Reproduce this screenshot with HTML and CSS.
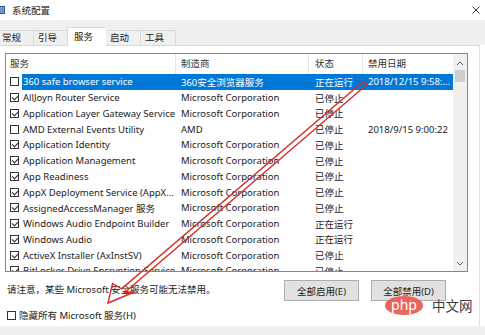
FILE: index.html
```html
<!DOCTYPE html>
<html lang="zh-CN">
<head>
    <meta charset="UTF-8">
    <title>系统配置</title>
    <link rel="stylesheet" href="styles.css">
</head>
<body>

    <!-- Title bar -->
    <div class="titlebar">
        <span class="app-icon"></span>
        <span class="title">系统配置</span>
        <svg class="close" viewBox="0 0 8 8"><path d="M0.5 0.5 L7.5 7.5 M7.5 0.5 L0.5 7.5" stroke="#222" stroke-width="0.9" fill="none"/></svg>
    </div>

    <!-- Tabs -->
    <div class="tabs">
        <div class="tab tab-general">常规</div>
        <div class="tab">引导</div>
        <div class="tab active">服务</div>
        <div class="tab">启动</div>
        <div class="tab">工具</div>
    </div>

    <div class="panel">
        <!-- Services list -->
        <div class="list">
            <div class="grid">
                <div class="head">
                    <div class="hcell c-name">服务</div>
                    <div class="hcell c-maker">制造商</div>
                    <div class="hcell c-state">状态</div>
                    <div class="hcell c-date">禁用日期</div>
                </div>

                <div class="row selected">
                    <span class="box"></span>
                    <div class="cells">
                        <span class="c-name">360 safe browser service</span>
                        <span class="c-maker">360安全浏览器服务</span>
                        <span class="c-state">正在运行</span>
                        <span class="c-date">2018/12/15 9:58:...</span>
                    </div>
                </div>
                <div class="row">
                    <span class="box checked"></span>
                    <div class="cells">
                        <span class="c-name">AllJoyn Router Service</span>
                        <span class="c-maker">Microsoft Corporation</span>
                        <span class="c-state">已停止</span>
                        <span class="c-date"></span>
                    </div>
                </div>
                <div class="row">
                    <span class="box checked"></span>
                    <div class="cells">
                        <span class="c-name">Application Layer Gateway Service</span>
                        <span class="c-maker">Microsoft Corporation</span>
                        <span class="c-state">已停止</span>
                        <span class="c-date"></span>
                    </div>
                </div>
                <div class="row">
                    <span class="box"></span>
                    <div class="cells">
                        <span class="c-name">AMD External Events Utility</span>
                        <span class="c-maker">AMD</span>
                        <span class="c-state">已停止</span>
                        <span class="c-date">2018/9/15 9:00:22</span>
                    </div>
                </div>
                <div class="row">
                    <span class="box checked"></span>
                    <div class="cells">
                        <span class="c-name">Application Identity</span>
                        <span class="c-maker">Microsoft Corporation</span>
                        <span class="c-state">已停止</span>
                        <span class="c-date"></span>
                    </div>
                </div>
                <div class="row">
                    <span class="box checked"></span>
                    <div class="cells">
                        <span class="c-name">Application Management</span>
                        <span class="c-maker">Microsoft Corporation</span>
                        <span class="c-state">已停止</span>
                        <span class="c-date"></span>
                    </div>
                </div>
                <div class="row">
                    <span class="box checked"></span>
                    <div class="cells">
                        <span class="c-name">App Readiness</span>
                        <span class="c-maker">Microsoft Corporation</span>
                        <span class="c-state">已停止</span>
                        <span class="c-date"></span>
                    </div>
                </div>
                <div class="row">
                    <span class="box checked"></span>
                    <div class="cells">
                        <span class="c-name">AppX Deployment Service (AppX...</span>
                        <span class="c-maker">Microsoft Corporation</span>
                        <span class="c-state">已停止</span>
                        <span class="c-date"></span>
                    </div>
                </div>
                <div class="row">
                    <span class="box checked"></span>
                    <div class="cells">
                        <span class="c-name">AssignedAccessManager 服务</span>
                        <span class="c-maker">Microsoft Corporation</span>
                        <span class="c-state">已停止</span>
                        <span class="c-date"></span>
                    </div>
                </div>
                <div class="row">
                    <span class="box checked"></span>
                    <div class="cells">
                        <span class="c-name">Windows Audio Endpoint Builder</span>
                        <span class="c-maker">Microsoft Corporation</span>
                        <span class="c-state">正在运行</span>
                        <span class="c-date"></span>
                    </div>
                </div>
                <div class="row">
                    <span class="box checked"></span>
                    <div class="cells">
                        <span class="c-name">Windows Audio</span>
                        <span class="c-maker">Microsoft Corporation</span>
                        <span class="c-state">正在运行</span>
                        <span class="c-date"></span>
                    </div>
                </div>
                <div class="row">
                    <span class="box checked"></span>
                    <div class="cells">
                        <span class="c-name">ActiveX Installer (AxInstSV)</span>
                        <span class="c-maker">Microsoft Corporation</span>
                        <span class="c-state">已停止</span>
                        <span class="c-date"></span>
                    </div>
                </div>
                <div class="row">
                    <span class="box checked"></span>
                    <div class="cells">
                        <span class="c-name">BitLocker Drive Encryption Service</span>
                        <span class="c-maker">Microsoft Corporation</span>
                        <span class="c-state">已停止</span>
                        <span class="c-date"></span>
                    </div>
                </div>
            </div>

            <!-- Scrollbar -->
            <div class="scrollbar">
                <svg class="arrow" viewBox="0 0 8 5"><path d="M1 4 L4 1 L7 4" stroke="#606060" stroke-width="1" fill="none"/></svg>
                <div class="thumb"></div>
                <div class="track"></div>
                <svg class="arrow" viewBox="0 0 8 5"><path d="M1 1 L4 4 L7 1" stroke="#606060" stroke-width="1" fill="none"/></svg>
            </div>
        </div>

        <!-- Notice and buttons -->
        <div class="actions">
            <p class="note">请注意，某些 Microsoft 安全服务可能无法禁用。</p>
            <button class="btn">全部启用(E)</button>
            <button class="btn">全部禁用(D)</button>
        </div>

        <label class="hide-ms"><span class="box"></span>隐藏所有 Microsoft 服务(H)</label>

        <!-- Watermark -->
        <div class="watermark">
            <span class="php">php</span>
            <span class="cn">中文网</span>
        </div>
    </div>

    <div class="footer"></div>

    <!-- Red annotation arrow -->
    <svg class="annotation" viewBox="0 0 485 335">
        <polygon points="363.4,81.2 121.6,288.8 112.5,283.5 108,303 134.5,292 125,292.2 366.6,84.8" fill="none" stroke="#d42e28" stroke-width="1.4" stroke-linejoin="miter"/>
    </svg>

</body>
</html>
```

FILE: styles.css
```css
/* Basic styles */
* {
    box-sizing: border-box;
}

body {
    margin: 0;
    width: 485px;
    height: 335px;
    overflow: hidden;
    position: relative;
    background-color: #ffffff;
    font-family: "Noto Sans", "Noto Sans CJK SC", sans-serif;
    font-size: 9.5px;
    color: #1b1b1b;
}

/* Title bar */
.titlebar {
    height: 20px;
    display: flex;
    align-items: center;
}

.app-icon {
    width: 5px;
    height: 8px;
    margin-right: 7px;
    background-color: #6d95cf;
    border: 1px solid #2f5e9e;
    border-left: none;
}

.title {
    flex: 1;
}

.close {
    width: 8px;
    height: 8px;
    margin-right: 5px;
}

/* Tabs */
.tabs {
    height: 25px;
    display: flex;
    align-items: flex-end;
    background-color: #f0f0f0;
}

.tab {
    height: 15px;
    line-height: 14px;
    width: 34px;
    padding-left: 4px;
    border: 1px solid #d9d9d9;
    border-bottom: none;
    border-right: none;
    background-color: #f0f0f0;
}

.tab-general {
    width: 33px;
    padding-left: 2px;
    border-left: none;
}

.tab.active {
    height: 19px;
    width: 39px;
    line-height: 17px;
    padding-left: 6px;
    margin-bottom: -1px;
    background-color: #ffffff;
    position: relative;
    z-index: 1;
}

.tab.active + .tab {
    border-left: none;
}

.tab:last-child {
    width: 36px;
    border-right: 1px solid #d9d9d9;
}

/* Panel */
.panel {
    position: relative;
    width: 480px;
    height: 281px;
    padding: 7px 0 0 5px;
    border-top: 1px solid #d9d9d9;
    border-right: 1px solid #e3e3e3;
}

.list {
    width: 463px;
    height: 219px;
    display: flex;
    border: 1px solid #828790;
    overflow: hidden;
}

.grid {
    flex: 1;
    overflow: hidden;
}

.head {
    height: 20px;
    display: flex;
    color: #333;
}

.hcell {
    line-height: 20px;
    border-right: 1px solid #e5e5e5;
    padding-left: 5px;
}

.head .c-name {
    width: 170px;
    padding-left: 4px;
}

.head .c-date {
    border-right: none;
}

.row {
    height: 15.75px;
    display: flex;
    align-items: center;
}

.row .box {
    margin: 0 3px 0 4px;
}

.cells {
    flex: 1;
    height: 100%;
    display: flex;
    align-items: center;
}

.row.selected .cells {
    background-color: #0078d7;
    color: #ffffff;
}

.c-name {
    width: 154px;
    padding-left: 1px;
    white-space: nowrap;
    overflow: hidden;
}

.c-maker {
    width: 133px;
    padding-left: 5px;
    white-space: nowrap;
    overflow: hidden;
}

.c-state {
    width: 54px;
    padding-left: 6px;
    white-space: nowrap;
}

.c-date {
    flex: 1;
    padding-left: 5px;
    white-space: nowrap;
    overflow: hidden;
}

/* Checkboxes */
.box {
    position: relative;
    flex: none;
    width: 9px;
    height: 9px;
    border: 1px solid #333;
    background-color: #ffffff;
}

.box.checked::after {
    content: "";
    position: absolute;
    left: 1px;
    top: 1px;
    width: 5px;
    height: 2.5px;
    border-left: 1px solid #222;
    border-bottom: 1px solid #222;
    transform: rotate(-45deg);
}

/* Scrollbar */
.scrollbar {
    width: 14px;
    display: flex;
    flex-direction: column;
    align-items: center;
    background-color: #f0f0f0;
}

.scrollbar .arrow {
    width: 8px;
    height: 5px;
    margin: 7px 0 4px;
}

.scrollbar .arrow:last-child {
    margin: 4px 0 5px;
}

.thumb {
    width: 10px;
    height: 12px;
    background-color: #cdcdcd;
}

.track {
    flex: 1;
}

/* Notice and buttons */
.actions {
    width: 463px;
    margin-top: 8px;
    padding-right: 22px;
    display: flex;
    align-items: flex-start;
}

.note {
    flex: 1;
    margin: 0;
    padding: 2px 0 0 2px;
}

.btn {
    width: 75px;
    height: 21px;
    margin-left: 12px;
    padding: 0;
    font-family: inherit;
    font-size: 9.5px;
    color: #1b1b1b;
    background-color: #e1e1e1;
    border: 1px solid #adadad;
}

.hide-ms {
    display: flex;
    align-items: center;
    margin-top: 7px;
    padding-left: 2px;
}

.hide-ms .box {
    margin-right: 3px;
}

.footer {
    height: 9px;
    background-color: #f0f0f0;
}

/* Watermark */
.watermark {
    position: absolute;
    left: 385px;
    top: 249px;
    display: flex;
    align-items: center;
}

.php {
    width: 38px;
    height: 19px;
    border-radius: 50%;
    background-color: #e8665e;
    color: #ffffff;
    font-size: 14px;
    line-height: 17px;
    text-align: center;
}

.cn {
    margin-left: 9px;
    font-size: 13.5px;
    color: #3a3a3a;
}

/* Annotation */
.annotation {
    position: absolute;
    left: 0;
    top: 0;
    width: 485px;
    height: 335px;
    pointer-events: none;
}
```
